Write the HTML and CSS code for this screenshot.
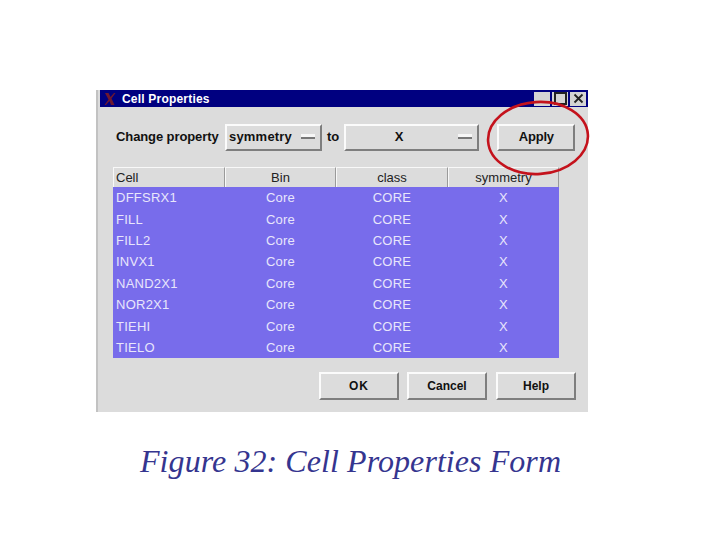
FILE: index.html
```html
<!DOCTYPE html>
<html>
<head>
<meta charset="utf-8">
<title>Figure 32</title>
<link rel="stylesheet" href="styles.css">
</head>
<body>
<div class="window">
  <div class="titlebar">
    <svg class="app-icon" width="14" height="14" viewBox="0 0 14 14"><path d="M2 1L5.500 1L7.500 5L11 1L12.500 1L8.500 6.500L11.500 13L8 13L6.500 9L3 13L1.500 13L5.500 7.500Z" fill="#6e1830"/></svg>
    <span class="title">Cell Properties</span>
    <span class="winbtns">
      <span class="winbtn"></span>
      <span class="winbtn"><i class="glyph-max"></i></span>
      <span class="winbtn"><svg width="13" height="13" viewBox="0 0 13 13"><path d="M2.500 2.500L10.500 10.500M10.500 2.500L2.500 10.500" stroke="#222" stroke-width="1.800"/></svg></span>
    </span>
  </div>
  <div class="content">
    <div class="controls">
      <span class="label">Change property</span>
      <div class="btn menu menu-a"><span>symmetry</span><i class="dash"></i></div>
      <span class="label to">to</span>
      <div class="btn menu menu-b"><span class="menu-val">X</span><i class="dash"></i></div>
      <div class="btn apply">Apply</div>
    </div>
    <div class="table">
      <div class="row head"><span class="left">Cell</span><span>Bin</span><span>class</span><span>symmetry</span></div>
      <div class="row"><span class="left">DFFSRX1</span><span>Core</span><span>CORE</span><span>X</span></div>
      <div class="row"><span class="left">FILL</span><span>Core</span><span>CORE</span><span>X</span></div>
      <div class="row"><span class="left">FILL2</span><span>Core</span><span>CORE</span><span>X</span></div>
      <div class="row"><span class="left">INVX1</span><span>Core</span><span>CORE</span><span>X</span></div>
      <div class="row"><span class="left">NAND2X1</span><span>Core</span><span>CORE</span><span>X</span></div>
      <div class="row"><span class="left">NOR2X1</span><span>Core</span><span>CORE</span><span>X</span></div>
      <div class="row"><span class="left">TIEHI</span><span>Core</span><span>CORE</span><span>X</span></div>
      <div class="row"><span class="left">TIELO</span><span>Core</span><span>CORE</span><span>X</span></div>
    </div>
    <div class="actions">
      <div class="btn action ok">OK</div>
      <div class="btn action">Cancel</div>
      <div class="btn action help">Help</div>
    </div>
  </div>
  <svg class="ring" width="110" height="90" viewBox="0 0 110 90"><ellipse cx="54" cy="39" rx="50" ry="36" fill="none" stroke="#c4121c" stroke-width="2.600" transform="rotate(-4 54 39)"/></svg>
</div>
<p class="caption">Figure 32: Cell Properties Form</p>
</body>
</html>
```
FILE: styles.css
```css
html, body { margin: 0; padding: 0; background: #fff; }
body { width: 720px; height: 540px; padding-top: 90px; box-sizing: border-box; overflow: hidden; font-family: "Liberation Sans", sans-serif; }
.window { position: relative; width: 492px; height: 322px; margin-left: 96px; background: #dcdcdc; box-sizing: border-box; border-left: 2px solid #c2c2c2; padding-left: 2px; }
.titlebar { display: flex; align-items: center; height: 17px; background: #000080; color: #fff; font-size: 12px; font-weight: bold; letter-spacing: 0.200px; }
.app-icon { margin-left: 3px; }
.title { margin-left: 5px; }
.winbtns { display: flex; margin-left: auto; margin-right: 2px; gap: 2px; }
.winbtn { width: 16px; height: 14px; background: #d4d4d4; display: flex; align-items: center; justify-content: center; }
.glyph-max { display: block; width: 13px; height: 13px; box-sizing: border-box; border: 2px solid #222; }
.content { display: flex; flex-direction: column; padding: 17px 12px 0 13px; }
.controls { display: flex; align-items: center; height: 27px; padding-left: 3px; }
.label { font-size: 13px; font-weight: bold; color: #111; width: 109px; white-space: nowrap; letter-spacing: -0.100px; padding-bottom: 2px; }
.label.to { width: auto; margin: 0 5px; letter-spacing: 0; }
.btn { box-sizing: border-box; height: 27px; background: #dcdcdc; border: 2px solid; border-color: #fbfbfb #7e7e7e #7e7e7e #fbfbfb; display: flex; align-items: center; font-size: 13px; font-weight: bold; color: #111; padding-bottom: 2px; }
.menu { padding: 0 3px 2px 2px; justify-content: space-between; letter-spacing: 0.200px; }
.menu-a { width: 97px; }
.menu-b { width: 135px; }
.menu-val { flex: 1; text-align: center; padding-right: 8px; }
.dash { display: block; width: 14px; height: 5px; background: #f6f6f6; border-bottom: 2px solid #777; box-sizing: border-box; flex: none; margin-right: 2px; }
.apply { width: 78px; margin-left: 18px; justify-content: center; letter-spacing: -0.200px; }
.table { margin-top: 16px; width: 446px; display: flex; flex-direction: column; background: #786ceb; }
.row { display: grid; grid-template-columns: 112px 111px 112px 111px; height: 21.400px; align-items: center; color: #e8e6fb; font-size: 13px; letter-spacing: 0.250px; }
.row span { text-align: center; white-space: nowrap; }
.row .left { text-align: left; padding-left: 3px; }
.row.head { height: 20px; background: #dcdcdc; color: #222; font-size: 13px; letter-spacing: 0; }
.row.head span { height: 20px; line-height: 20px; box-sizing: border-box; border-top: 1px solid #f8f8f8; border-left: 1px solid #f8f8f8; border-right: 1px solid #9a9a9a; }
.row.head .left { padding-left: 2px; }
.actions { display: flex; margin-top: 14px; margin-left: 206px; gap: 8px; }
.action { width: 80px; height: 28px; justify-content: center; font-size: 12px; padding-bottom: 0; }
.ok { letter-spacing: 1px; }
.help { margin-left: 1px; }
.ring { position: absolute; left: 386px; top: 9px; }
.caption { margin: 30px 0 0 140px; font-family: "Liberation Serif", serif; font-style: italic; font-size: 32px; line-height: 38px; letter-spacing: 0.070px; color: #35358f; white-space: nowrap; }
```
